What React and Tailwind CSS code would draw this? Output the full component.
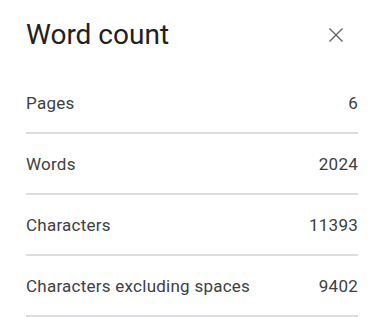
const stats = [
  { label: 'Pages', value: '6' },
  { label: 'Words', value: '2024' },
  { label: 'Characters', value: '11393' },
  { label: 'Characters excluding spaces', value: '9402' },
];

export default function App() {
  return (
    <div
      className="w-[386px] h-[317px] bg-white pl-[26px] pr-[28px] overflow-hidden"
      style={{ fontFamily: 'Roboto, "Liberation Sans", sans-serif' }}
    >
      <div className="flex items-center justify-between pt-[17px] pb-[20px]">
        <h1 className="text-[28px] leading-[36px] text-[#202124]">Word count</h1>
        <button className="w-6 h-6 mr-[10px] flex items-center justify-center text-[#5f6368]">
          <svg width="24" height="24" viewBox="0 0 24 24" fill="none" stroke="currentColor" strokeWidth="1.4">
            <path d="M5.5 5.5 18.5 18.5M18.5 5.5 5.5 18.5" />
          </svg>
        </button>
      </div>
      {stats.map((s) => (
        <div
          key={s.label}
          className="flex justify-between pt-[18px] pb-[17px] border-b-2 border-[#dadce0] text-[17px] leading-6 tracking-[0.25px] text-[#3c4043]"
        >
          <span>{s.label}</span>
          <span>{s.value}</span>
        </div>
      ))}
    </div>
  );
}
